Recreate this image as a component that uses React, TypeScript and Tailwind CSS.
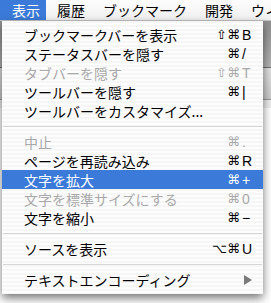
import React from "react";

type Item =
  | { kind: "item"; label: string; mods?: string; key?: string; disabled?: boolean; active?: boolean; submenu?: boolean }
  | { kind: "sep" };

const items: Item[] = [
  { kind: "item", label: "ブックマークバーを表示", mods: "⇧⌘", key: "B" },
  { kind: "item", label: "ステータスバーを隠す", mods: "⌘", key: "/" },
  { kind: "item", label: "タブバーを隠す", mods: "⇧⌘", key: "T", disabled: true },
  { kind: "item", label: "ツールバーを隠す", mods: "⌘", key: "|" },
  { kind: "item", label: "ツールバーをカスタマイズ..." },
  { kind: "sep" },
  { kind: "item", label: "中止", mods: "⌘", key: ".", disabled: true },
  { kind: "item", label: "ページを再読み込み", mods: "⌘", key: "R" },
  { kind: "item", label: "文字を拡大", mods: "⌘", key: "+", active: true },
  { kind: "item", label: "文字を標準サイズにする", mods: "⌘", key: "0", disabled: true },
  { kind: "item", label: "文字を縮小", mods: "⌘", key: "−" },
  { kind: "sep" },
  { kind: "item", label: "ソースを表示", mods: "⌥⌘", key: "U" },
  { kind: "sep" },
  { kind: "item", label: "テキストエンコーディング", submenu: true },
];

const MenuRow: React.FC<{ item: Item }> = ({ item }) => {
  if (item.kind === "sep") {
    return (
      <div className="h-[12px] flex items-center px-[1px]">
        <div className="h-px w-full bg-[#d6d6d6]" />
      </div>
    );
  }

  const color = item.active
    ? "bg-[#3b7ad8] text-white"
    : item.disabled
    ? "text-[#a9a9a9]"
    : "text-black";

  return (
    <div className={`h-[19px] flex items-center pl-[22px] pr-[12px] ${color}`}>
      <span className="flex-1 text-[14px] leading-none whitespace-nowrap">{item.label}</span>
      {item.mods && (
        <span className="flex items-center leading-none">
          <span className="font-['DejaVu_Sans',sans-serif] text-[13px]">{item.mods}</span>
          <span className="w-[11px] pl-[2px] text-[14px] font-['Liberation_Sans',sans-serif]">{item.key}</span>
        </span>
      )}
      {item.submenu && (
        <svg width="8" height="10" viewBox="0 0 8 10" className="mr-[-1px]">
          <path d="M0 0 L8 5 L0 10 Z" fill="#7a7a7a" />
        </svg>
      )}
    </div>
  );
};

export default function App() {
  return (
    <div className="relative w-[271px] h-[303px] overflow-hidden bg-white font-['Noto_Sans_CJK_JP',sans-serif]">
      {/* menu bar */}
      <div className="h-[21px] flex items-center whitespace-nowrap bg-[linear-gradient(#fdfdfd,#f0f0f0)] border-b border-[#c4c4c4] text-[14px] leading-none text-black">
        <div className="h-full flex items-center pl-[12px] pr-[6px] bg-[#3b7ad8] text-white">表示</div>
        <div className="ml-[2px] px-[9px]">履歴</div>
        <div className="px-[9px]">ブックマーク</div>
        <div className="px-[9px]">開発</div>
        <div className="pl-[9px]">ウィ</div>
      </div>

      {/* window behind */}
      <div className="h-[47px] bg-[linear-gradient(#8f8f8f,#b4b4b4)] border-b border-[#6f6f6f]" />
      <div className="h-[32px] bg-[linear-gradient(#e2e2e2,#cacaca)] border-b border-[#9a9a9a]" />
      <div className="h-[8px] bg-[#eeeeee]" />

      {/* dropdown menu */}
      <div className="absolute left-[2px] top-[21px] w-[261px] pt-[4px] pb-[5px] bg-[repeating-linear-gradient(#f6f6f6_0px,#f6f6f6_2px,#fdfdfd_2px,#fdfdfd_4px)] shadow-[0_4px_9px_rgba(0,0,0,0.55)]">
        {items.map((item, i) => (
          <MenuRow key={i} item={item} />
        ))}
      </div>
    </div>
  );
}
